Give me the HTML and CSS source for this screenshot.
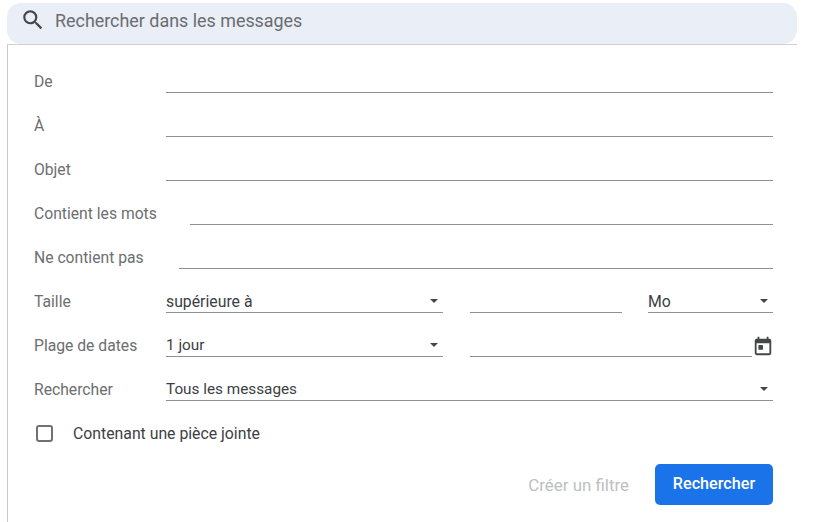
FILE: index.html
```
<!DOCTYPE html>
<html lang="fr">
<head>
<meta charset="utf-8">
<title>Recherche</title>
<link rel="stylesheet" href="styles.css">
</head>
<body>
<div class="app">
  <div class="searchbar">
    <svg class="search-icon" viewBox="0 0 24 24" width="26" height="26"><path d="M15.5 14h-.79l-.28-.27A6.47 6.47 0 0 0 16 9.5 6.5 6.5 0 1 0 9.5 16c1.61 0 3.09-.59 4.23-1.57l.27.28v.79l5 4.99L20.49 19l-4.99-5zm-6 0C7.01 14 5 11.99 5 9.5S7.01 5 9.5 5 14 7.01 14 9.5 11.99 14 9.5 14z"/></svg>
    <span class="search-text">Rechercher dans les messages</span>
  </div>
  <form class="panel">
    <div class="row"><span class="label">De</span><span class="field grow"></span></div>
    <div class="row"><span class="label">À</span><span class="field grow"></span></div>
    <div class="row"><span class="label">Objet</span><span class="field grow"></span></div>
    <div class="row"><span class="label label-wide">Contient les mots</span><span class="field grow"></span></div>
    <div class="row"><span class="label label-mid">Ne contient pas</span><span class="field grow"></span></div>
    <div class="row">
      <span class="label">Taille</span>
      <span class="field select w-main">supérieure à<i class="caret"></i></span>
      <span class="field w-num"></span>
      <span class="field select w-unit">Mo<i class="caret"></i></span>
    </div>
    <div class="row">
      <span class="label">Plage de dates</span>
      <span class="field field-tight select w-main">1 jour<i class="caret"></i></span>
      <span class="field grow date"></span>
      <svg class="cal" viewBox="0 0 24 24" width="24" height="24"><path d="M19 4h-1V2h-2v2H8V2H6v2H5a2 2 0 0 0-2 2v14a2 2 0 0 0 2 2h14a2 2 0 0 0 2-2V6a2 2 0 0 0-2-2zm0 16H5V9h14v11z"/><rect x="7" y="11" width="5" height="5" rx=".5"/></svg>
    </div>
    <div class="row">
      <span class="label">Rechercher</span>
      <span class="field field-tight select grow">Tous les messages<i class="caret"></i></span>
    </div>
    <label class="check-row"><span class="checkbox"></span><span class="check-label">Contenant une pièce jointe</span></label>
    <div class="actions">
      <span class="filter">Créer un filtre</span>
      <button type="button" class="submit">Rechercher</button>
    </div>
  </form>
</div>
</body>
</html>
```
FILE: styles.css
```
* { box-sizing: border-box; }
html, body { margin: 0; padding: 0; background: #fff; }
body { font-family: Roboto, "Liberation Sans", sans-serif; overflow: hidden; }
.app { width: 790px; height: 522px; margin: 3px 0 0 7px; display: flex; flex-direction: column; }
.searchbar {
  height: 41px; flex: none; background: #e9eef7; border-radius: 14px;
  display: flex; align-items: center; padding-left: 13px; padding-bottom: 7px;
}
.search-icon { fill: #444746; flex: none; }
.search-text { margin-left: 9px; font-size: 17.9px; color: #6a6c6f; }
.panel {
  flex: 1; border-top: 1px solid #cfd0d2; border-left: 1px solid #c8c8c8;
  padding: 4px 24px 0 26px; display: flex; flex-direction: column;
}
.row { height: 44px; flex: none; display: flex; align-items: flex-end; }
.label { width: 132px; flex: none; font-size: 15.7px; color: #6c6e70; line-height: 20px; padding-bottom: 1px; }
.label-wide { width: 156px; }
.label-mid { width: 145px; }
.field {
  height: 24px; border-bottom: 1px solid #8f9193; font-size: 15.8px; color: #3c4043;
  line-height: 23px; padding-top: 1px; display: flex; justify-content: space-between; align-items: center;
}
.field-tight { font-size: 15.3px; }
.grow { flex: 1; min-width: 0; }
.w-main { width: 277px; flex: none; margin-right: 27px; }
.w-num { width: 152px; flex: none; margin-right: 26px; }
.w-unit { width: 125px; flex: none; }
.caret {
  width: 0; height: 0; border: 4.5px solid transparent; border-top-color: #444746;
  border-bottom-width: 0; margin-right: 5px;
}
.cal { fill: #444746; flex: none; width: 22px; height: 22px; margin: 0 -1px 0 0; align-self: flex-end; }
.check-row { display: flex; align-items: center; height: 24px; margin-top: 20px; flex: none; }
.checkbox { width: 17px; height: 17px; margin-left: 2px; border: 2px solid #6f7174; border-radius: 3px; flex: none; }
.check-label { margin-left: 20px; font-size: 15.8px; color: #3c4043; }
.actions { display: flex; justify-content: flex-end; align-items: center; margin-top: 19px; flex: none; }
.filter { font-size: 16.9px; color: #bdbfc1; margin-right: 26px; }
.submit {
  width: 118px; height: 41px; border: 0; border-radius: 5px; background: #1a73e8; color: #fff;
  font: 500 16.2px Roboto, "Liberation Sans", sans-serif; padding: 0 0 3px;
}
```
